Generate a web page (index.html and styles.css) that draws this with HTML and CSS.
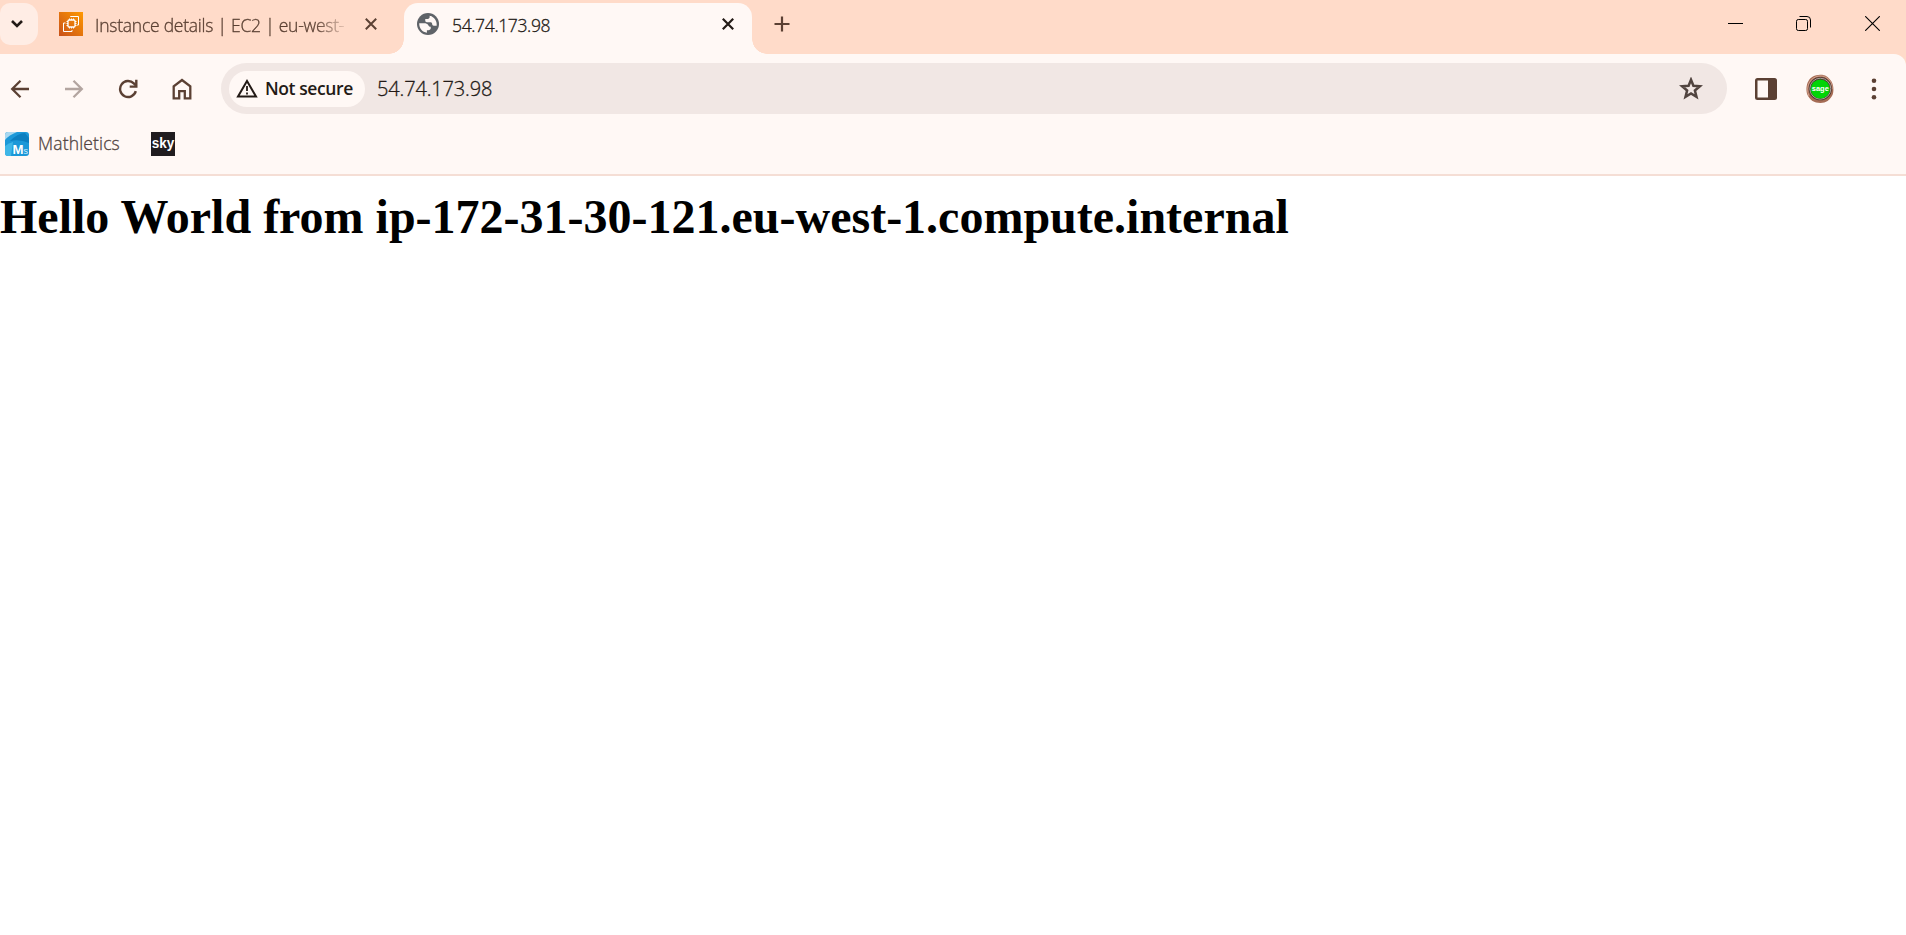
FILE: index.html
```html
<!DOCTYPE html>
<html lang="en">
<head>
<meta charset="utf-8">
<title>54.74.173.98</title>
<link rel="stylesheet" href="styles.css">
</head>
<body>
<header class="browser">
  <div class="tabstrip">
    <div class="tab-search">
      <svg width="14" height="10" viewBox="0 0 14 10"><path d="M2 2l5 5 5-5" fill="none" stroke="#231a16" stroke-width="2.6"/></svg>
    </div>
    <div class="tab">
      <svg class="fav" width="24" height="24" viewBox="0 0 24 24">
        <defs><linearGradient id="ec2" x1="0" y1="1" x2="1" y2="0"><stop offset="0" stop-color="#c8511b"/><stop offset="1" stop-color="#f90"/></linearGradient></defs>
        <path fill="url(#ec2)" d="M0 0h24v24H0z"/>
        <g fill="none" stroke="#fff" stroke-width="1"><rect x="9" y="8" width="7" height="7" rx="1" stroke-width="1.3"/><path d="M10.500 6.500v1.500M12.500 6.500v1.500M14.500 6.500v1.500M10.500 15v1.500M12.500 15v1.500M14.500 15v1.500M7.500 9.500h1.500M7.500 11.500h1.500M7.500 13.500h1.500M16 9.500h1.500M16 11.500h1.500M16 13.500h1.500M11.500 5V4.500h8V13H18M6.500 11H4.500v8.500H13V18"/></g>
      </svg>
      <span class="tab-title fade">Instance details | EC2 | eu-west-</span>
      <svg class="x" width="12" height="12" viewBox="0 0 12 12"><path d="M.8.8l10.400 10.400M11.200.8L.8 11.200" stroke="#5b4033" stroke-width="2"/></svg>
    </div>
    <div class="tab active">
      <svg class="fav" width="22" height="22" viewBox="2 2 20 20"><path fill="#5f6368" d="M12 2a10 10 0 1 0 0 20 10 10 0 0 0 0-20z"/><path fill="#fff8f5" d="M4 11.400h4.400c1.800 0 3.100.5 3.900 1.700.5 1 1.100 1.400 2.200 1.400v1.400c0 1-.9 1.700-2.100 1.700H11v2.300C7 19.600 4 16.200 4 11.400zM13.500 4.200v1.500c0 1-.7 1.700-1.700 1.700H9.500v1.500c0 .9.600 1.600 1.500 1.600h3.200c.9 0 1.500.6 1.600 1.600 0 .9.600 1.500 1.400 1.500h2.700c.5-4.400-2.300-8.400-6.700-9.400z"/></svg>
      <span class="tab-title">54.74.173.98</span>
      <svg class="x" width="12" height="12" viewBox="0 0 12 12"><path d="M.8.8l10.400 10.400M11.200.8L.8 11.200" stroke="#231a16" stroke-width="2.200"/></svg>
    </div>
    <svg class="plus" width="16" height="16" viewBox="0 0 16 16"><path d="M8 .5v15M.5 8h15" stroke="#5b4033" stroke-width="2.200"/></svg>
    <div class="window-controls">
      <svg width="15" height="15" viewBox="0 0 15 15"><path d="M0 7.500h15" stroke="#000"/></svg>
      <svg width="15" height="15" viewBox="0 0 15 15" fill="none" stroke="#000"><rect x=".5" y="3.500" width="11" height="11" rx="1.800"/><path d="M3.500.5H11A3.500 3.500 0 0 1 14.500 4v7.500"/></svg>
      <svg width="15" height="15" viewBox="0 0 15 15"><path d="M.2.2l14.600 14.600M14.800.2L.2 14.800" stroke="#000" stroke-width="1.100"/></svg>
    </div>
  </div>
  <div class="toolbar">
    <div class="nav">
      <svg width="20" height="20" viewBox="0 0 20 20" fill="none" stroke="#5b4033" stroke-width="2.300"><path d="M19 10H2.500M10.500 1.700L2.200 10l8.300 8.300"/></svg>
      <svg width="20" height="20" viewBox="0 0 20 20" fill="none" stroke="#b3a5a0" stroke-width="2.300"><path d="M1 10h16.500M9.500 1.700l8.300 8.300-8.300 8.300"/></svg>
      <svg width="20" height="20" viewBox="0 0 20 20" fill="none" stroke="#5b4033" stroke-width="2.400"><path d="M17.800 12.200A8 8 0 1 1 15.800 4.400l2 2"/><path d="M18.300.8v6.800h-6.600"/></svg>
      <svg width="20" height="22" viewBox="0 0 20 22" fill="none" stroke="#5b4033" stroke-width="2.300"><path d="M1.700 20.300V8.400L10 2l8.300 6.400v11.900h-5.500v-7.100H7.200v7.100z"/></svg>
    </div>
    <div class="omnibox">
      <div class="chip">
        <svg width="22" height="19" viewBox="0 0 22 19"><path d="M2 17.500L11 2l9 15.500z" fill="none" stroke="#231a16" stroke-width="2"/><path d="M11 7v5M11 13.500v2" stroke="#231a16" stroke-width="1.800"/></svg>
        <span class="chip-text">Not secure</span>
      </div>
      <span class="url">54.74.173.98</span>
      <svg class="star" width="24" height="23" viewBox="0 0 24 23"><path d="M12 2.800l2.400 6 6.500.5-5 4.200 1.600 6.400L12 16.500l-5.500 3.400 1.600-6.400-5-4.200 6.500-.5z" fill="none" stroke="#51443f" stroke-width="2.500"/></svg>
    </div>
    <svg class="panel" width="22" height="22" viewBox="0 0 22 22"><rect width="22" height="22" rx="2.500" fill="#5b4033"/><path d="M2.500 2.500h10.500v17H2.500z" fill="#fff8f5"/></svg>
    <svg class="avatar" width="28" height="30" viewBox="0 0 28 30">
      <path d="M14 .7c5-.2 8 2 10.500 5.500C28 10 28 18 26.500 21 24 26 20 29 14.500 29 8 29 4 26 1.500 21 0 17 0 11 2.500 7 4 3 9 1 14 .7z" fill="#a66c55"/>
      <path d="M3 22C-1 13 4 3 13 2c8-1 14 6 13 13" fill="none" stroke="#d2a18d"/>
      <circle cx="14.300" cy="14.700" r="11.600" fill="#4c352e"/><circle cx="14.300" cy="14.700" r="10.500" fill="none" stroke="#aaa39c" stroke-width="1"/><circle cx="14.300" cy="15" r="9.600" fill="#00d407"/>
      <text x="14.300" y="17" text-anchor="middle" textLength="17" lengthAdjust="spacingAndGlyphs" class="avatar-text">sage</text>
    </svg>
    <svg class="menu" width="6" height="22" viewBox="0 0 6 22" fill="#5b4033"><circle cx="3" cy="2.700" r="2.300"/><circle cx="3" cy="11" r="2.300"/><circle cx="3" cy="19.300" r="2.300"/></svg>
  </div>
  <div class="bookmarks">
    <svg width="24" height="24" viewBox="0 0 24 24">
      <defs><clipPath id="mc"><rect width="24" height="24" rx="3"/></clipPath></defs>
      <g clip-path="url(#mc)"><path fill="#1c98d8" d="M0 0h24v24H0z"/><path fill="#a9d8f0" d="M0 0h12Q4 3 0 8z"/><path fill="#0c7fc0" d="M5 9Q13 1 20 1l4 5v5Q15 7 5 9z"/><path fill="#3fb6e7" d="M0 14Q4 11 8 10L6 24H0z"/></g>
      <text x="7.500" y="21.500" class="m-big" textLength="11" lengthAdjust="spacingAndGlyphs">M</text><text x="18.500" y="22" class="m-small">s</text>
    </svg>
    <span class="bm-text">Mathletics</span>
    <svg class="sky" width="24" height="24" viewBox="0 0 24 24"><path fill="#201c1f" d="M0 0h24v24H0z"/><text x=".7" y="15.500" class="sky-text" textLength="22.500" lengthAdjust="spacingAndGlyphs">sky</text></svg>
  </div>
</header>
<main class="page"><h1 class="heading">Hello World from ip-172-31-30-121.eu-west-1.compute.internal</h1></main>
</body>
</html>
```
FILE: styles.css
```css
* { box-sizing: border-box; }
body { margin: 0; background: #fff; overflow: hidden; }
svg { display: block; flex: none; }
.browser {
  height: 176px;
  background: #ffdbc9;
  border-bottom: 2px solid #f5ded5;
  font-family: "Open Sans", "Noto Sans", sans-serif;
  font-weight: 300;
  white-space: nowrap;
}
.tab-title, .url, .bm-text { -webkit-text-stroke: 0.3px currentColor; }
.tabstrip { display: flex; height: 54px; padding-top: 3px; background: #ffdbc9; }
.tab-search {
  width: 38px;
  height: 42px;
  padding: 16px 0 0 10px;
  border-radius: 10px 14px 14px 10px;
  background: #ffede5;
}
.tab { display: flex; width: 366px; padding: 9px 27px 0 21px; }
.tab-title { margin-left: 12px; font-size: 17.5px; line-height: 24px; padding-top: 1px; color: #5b4033; letter-spacing: -0.35px; }
.fade {
  width: 252px;
  letter-spacing: -0.24px;
  overflow: hidden;
  -webkit-mask-image: linear-gradient(90deg, #000 220px, transparent 256px);
  mask-image: linear-gradient(90deg, #000 220px, transparent 256px);
}
.x { margin: 6px 0 0 auto; }
.active {
  position: relative;
  width: 348px;
  padding: 9px 18px 0 13px;
  border-radius: 14px 14px 0 0;
  background: #fff8f5;
}
.active .tab-title { margin-left: 13px; color: #231a16; }
.active .fav { margin-top: 1px; }
.active::before, .active::after {
  content: "";
  position: absolute;
  bottom: 0;
  width: 15px;
  height: 15px;
}
.active::before { left: -15px; background: radial-gradient(circle at 0 0, #ffdbc9 14.500px, #fff8f5 15px); }
.active::after { right: -15px; background: radial-gradient(circle at 15px 0, #ffdbc9 14.500px, #fff8f5 15px); }
.plus { margin: 13px 0 0 22px; }
.window-controls { display: flex; gap: 53px; margin-left: auto; padding: 13px 26px 0 0; }
.window-controls svg:nth-child(2) { margin-right: 1px; }
.toolbar {
  display: flex;
  align-items: center;
  height: 69px;
  padding-left: 10px;
  border-top-right-radius: 12px;
  background: #fff8f5;
}
.nav { display: flex; align-items: center; gap: 34px; width: 211px; }
.omnibox {
  display: flex;
  align-items: center;
  width: 1506px;
  height: 51px;
  padding: 0 24px 0 8px;
  border-radius: 26px;
  background: #f1e7e4;
}
.chip {
  display: flex;
  align-items: center;
  width: 136px;
  height: 36px;
  padding-left: 7px;
  border-radius: 18px;
  background: #fff8f5;
  color: #231a16;
}
.chip-text { margin-left: 7px; padding-bottom: 1px; font-size: 17.5px; font-weight: 550; letter-spacing: -0.4px; }
.url { margin-left: 12px; padding-bottom: 1px; font-size: 20px; letter-spacing: -0.15px; color: #231a16; }
.star { margin-left: auto; }
.panel { margin-left: 28px; }
.avatar { margin-left: 29px; }
.avatar-text { font: bold 8px "Liberation Sans", sans-serif; fill: #fff; }
.menu { margin-left: 37px; }
.bookmarks { display: flex; align-items: center; height: 51px; padding: 0 0 9px 5px; background: #fff8f5; }
.bm-text { margin-left: 9px; padding-bottom: 2px; width: 82px; font-size: 17.5px; letter-spacing: 0.15px; color: #51443f; }
.sky { margin-left: 31px; }
.sky-text { font: bold 14px "Liberation Sans", sans-serif; fill: #fff; }
.m-big { font: bold 13px "Liberation Sans", sans-serif; fill: #fff; }
.m-small { font: 9px "Liberation Sans", sans-serif; fill: #d5effb; }
.page { padding-top: 13px; }
.heading { margin: 0; font: bold 48px/55px "Liberation Serif", "Times New Roman", serif; color: #000; white-space: nowrap; }
```
